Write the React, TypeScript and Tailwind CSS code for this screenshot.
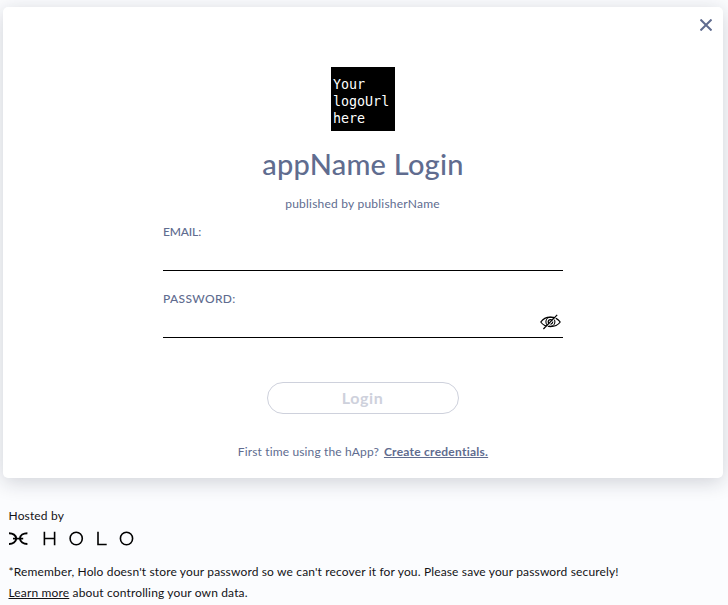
import React from 'react';

function HoloLogo() {
  return (
    <svg width="126" height="16" viewBox="0.6 0.4 126 16" fill="none" stroke="#000" className="block">
      <path d="M0.4 2.6C4.4 2.6 7.8 4.6 7.8 8C7.8 11.4 4.4 13.4 0.4 13.4" strokeWidth="1.9" />
      <path d="M19 2.6C15 2.6 11.6 4.6 11.6 8C11.6 11.4 15 13.4 19 13.4" strokeWidth="1.9" />
      <path d="M4.6 8H14.8" strokeWidth="1.7" />
      <path d="M36 1.2V14.6M46.2 1.2V14.6M36 7.9H46" strokeWidth="1.6" />
      <ellipse cx="67.8" cy="7.9" rx="6.1" ry="6.3" strokeWidth="1.6" />
      <path d="M89.6 1.2V13.9H98.3" strokeWidth="1.6" />
      <ellipse cx="118.1" cy="7.9" rx="6.1" ry="6.3" strokeWidth="1.6" />
    </svg>
  );
}

function HiddenEye() {
  return (
    <svg width="21" height="16" viewBox="0 0 21 16" fill="none" stroke="#000" className="block">
      <path d="M0.8 8C5 1.4 15.8 1.4 20.2 8C15.8 14.2 5 14.2 0.8 8Z" strokeWidth="1.2" />
      <circle cx="10.4" cy="7.8" r="4.5" strokeWidth="1.1" />
      <circle cx="10.4" cy="7.8" r="2.2" strokeWidth="1.2" />
      <path d="M4.4 15.2L18.2 1.2" stroke="#fff" strokeWidth="1.1" />
      <path d="M3.4 15L17.2 0.8" strokeWidth="1.2" />
    </svg>
  );
}

export default function App() {
  return (
    <div className="h-[605px] overflow-hidden bg-[#fbfcfe] px-[3px] pt-[7px] font-['Lato',sans-serif] text-[12px] text-[#606c8f]">
      <main className="relative flex h-[471px] w-[720px] flex-col items-center rounded-[5px] bg-white pt-[60px] shadow-[0_4px_20px_rgba(20,25,50,0.19)]">
        <button aria-label="Close" className="absolute top-[12px] right-[11px]">
          <svg width="12" height="12" viewBox="0 0 12 12" stroke="#606c8f" strokeWidth="2" className="block">
            <path d="M0.5 0.5L11.5 11.5M11.5 0.5L0.5 11.5" />
          </svg>
        </button>
        <div className="h-16 w-16 bg-black pt-[9px] pl-[2px] font-['DejaVu_Sans_Mono',monospace] text-[13.33px] leading-[17px] text-white">
          Your<br />logoUrl<br />here
        </div>
        <h1 className="mt-[13px] h-10 text-[29px] leading-10 font-medium tracking-[0.22px] whitespace-nowrap">appName Login</h1>
        <p className="mt-[12px] mr-px h-4 leading-4 tracking-[0.22px]">published by publisherName</p>
        <form className="flex w-[400px] flex-col">
          <label className="mt-3 h-[47px] border-b border-black leading-4 font-medium tracking-[-0.15px]">EMAIL:</label>
          <label className="mt-5 flex h-[47px] justify-between border-b border-black leading-4 font-medium tracking-[0.35px]">
            PASSWORD:
            <span className="mt-[23px] mr-[2px]"><HiddenEye /></span>
          </label>
          <button type="button" className="mt-[44px] h-8 w-48 self-center rounded-full border border-[#ced1dc] pr-px pb-px text-[16px] leading-[28px] font-bold tracking-[0.6px] text-[#ced1dc]">Login</button>
        </form>
        <p className="mt-[30px] flex h-4 gap-[5px] leading-4 whitespace-nowrap">
          <span className="tracking-[0.14px]">First time using the hApp?</span>
          <a className="font-bold tracking-[0.25px] underline">Create credentials.</a>
        </p>
      </main>
      <footer className="pt-[30px] pl-[5.5px] leading-4 tracking-[0.15px] text-[#131316]">
        <p>Hosted by</p>
        <div className="mt-[7px] h-4"><HoloLogo /></div>
        <p className="mt-[17px] whitespace-nowrap"><span>*Remember, Holo doesn't store your password so we can't recover it for you. Please save your password securely!</span></p>
        <p className="mt-[5px] whitespace-nowrap"><a className="underline">Learn more</a> about controlling your own data.</p>
      </footer>
    </div>
  );
}
